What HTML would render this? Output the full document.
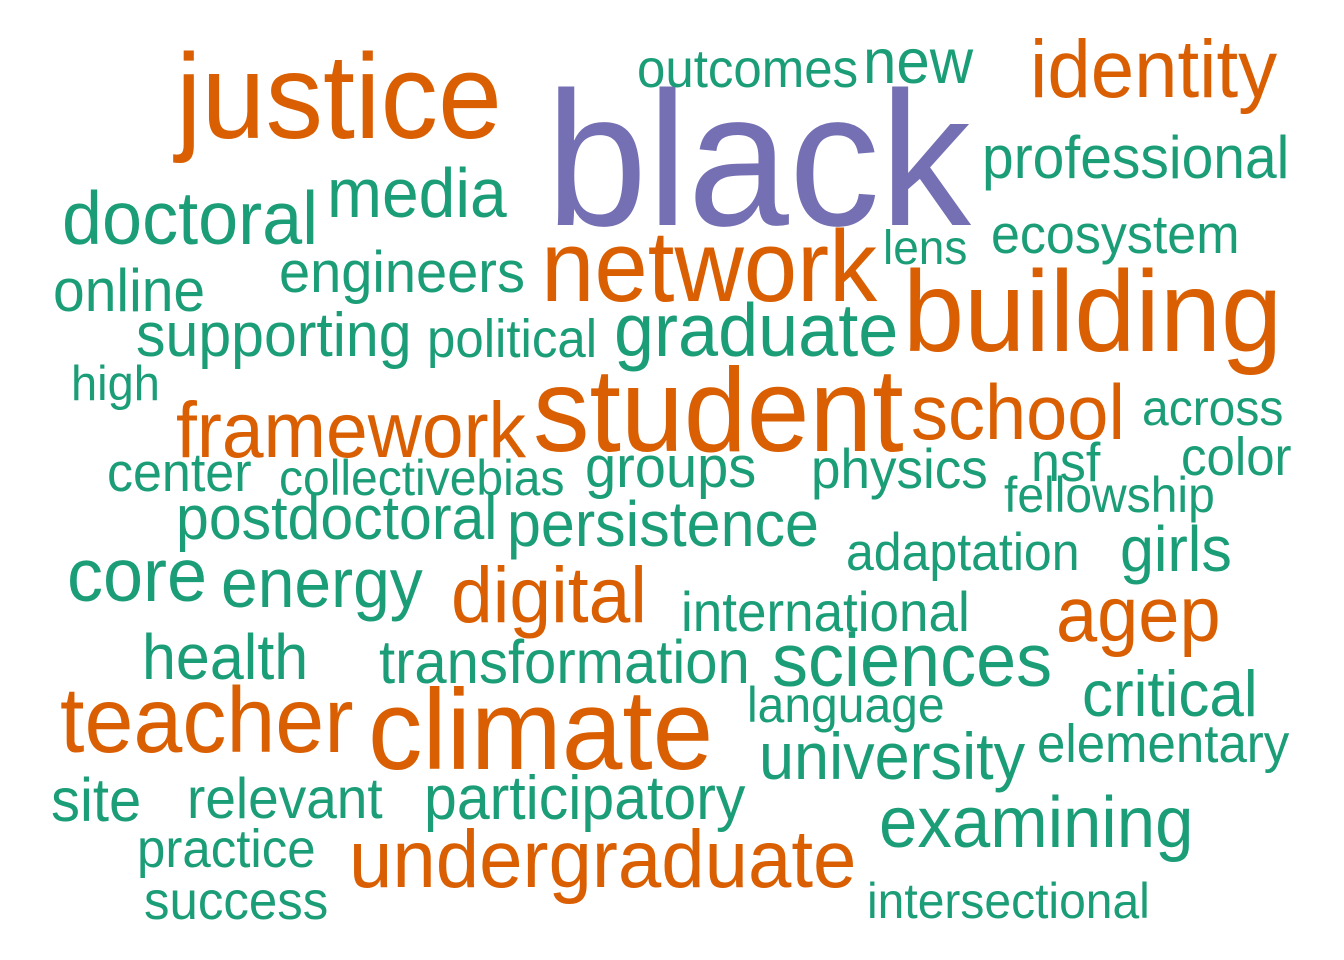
<!DOCTYPE html>
<html><head><meta charset="utf-8"><style>
html,body{margin:0;padding:0;background:#fff;width:1344px;height:960px;overflow:hidden}
body{position:relative;font-family:"Liberation Sans",Arial,sans-serif}
.w{position:absolute;white-space:nowrap;line-height:1;color:#1b9e77;
top:calc(var(--b)*1px + 2px - var(--s)*0.8465px);font-size:calc(var(--s)*1px);
transform:scaleY(1.05);transform-origin:0 0.8465em}
.o{color:#d95f02}.p{color:#7570b3}
</style></head><body>
<div class="w p" style="left:546px;--b:223;--s:182">black</div>
<div class="w o" style="left:176px;--b:137;--s:115">justice</div>
<div class="w o" style="left:1030px;--b:95;--s:78">identity</div>
<div class="w" style="left:637px;--b:85;--s:51">outcomes</div>
<div class="w" style="left:863px;--b:82;--s:60">new</div>
<div class="w" style="left:982px;--b:177;--s:57">professional</div>
<div class="w" style="left:327px;--b:215;--s:66">media</div>
<div class="w" style="left:62px;--b:243;--s:72">doctoral</div>
<div class="w o" style="left:541px;--b:300;--s:96">network</div>
<div class="w" style="left:883px;--b:262;--s:46">lens</div>
<div class="w" style="left:991px;--b:252;--s:52">ecosystem</div>
<div class="w" style="left:279px;--b:290;--s:56">engineers</div>
<div class="w" style="left:53px;--b:310;--s:57">online</div>
<div class="w o" style="left:903px;--b:350;--s:110">building</div>
<div class="w" style="left:136px;--b:355;--s:59">supporting</div>
<div class="w" style="left:427px;--b:355;--s:51">political</div>
<div class="w" style="left:614px;--b:355;--s:72">graduate</div>
<div class="w" style="left:71px;--b:398;--s:47">high</div>
<div class="w o" style="left:176px;--b:455;--s:75">framework</div>
<div class="w o" style="left:533px;--b:450;--s:113">student</div>
<div class="w o" style="left:911px;--b:438;--s:74">school</div>
<div class="w" style="left:1142px;--b:425;--s:48">across</div>
<div class="w" style="left:1031px;--b:480;--s:52">nsf</div>
<div class="w" style="left:1181px;--b:473;--s:51">color</div>
<div class="w" style="left:1004px;--b:512;--s:48">fellowship</div>
<div class="w" style="left:107px;--b:490;--s:52">center</div>
<div class="w" style="left:279px;--b:495;--s:48">collectivebias</div>
<div class="w" style="left:585px;--b:485;--s:56">groups</div>
<div class="w" style="left:811px;--b:487;--s:53">physics</div>
<div class="w" style="left:176px;--b:538;--s:59">postdoctoral</div>
<div class="w" style="left:507px;--b:545;--s:61">persistence</div>
<div class="w" style="left:846px;--b:568;--s:50">adaptation</div>
<div class="w" style="left:1120px;--b:570;--s:61">girls</div>
<div class="w" style="left:67px;--b:600;--s:72">core</div>
<div class="w" style="left:221px;--b:605;--s:66">energy</div>
<div class="w o" style="left:451px;--b:620;--s:75">digital</div>
<div class="w" style="left:681px;--b:630;--s:53">international</div>
<div class="w o" style="left:1056px;--b:640;--s:74">agep</div>
<div class="w" style="left:142px;--b:678;--s:61">health</div>
<div class="w" style="left:379px;--b:682;--s:58">transformation</div>
<div class="w" style="left:772px;--b:685;--s:72">sciences</div>
<div class="w" style="left:1082px;--b:715;--s:62">critical</div>
<div class="w o" style="left:60px;--b:750;--s:88">teacher</div>
<div class="w o" style="left:368px;--b:768;--s:109">climate</div>
<div class="w" style="left:747px;--b:722;--s:48">language</div>
<div class="w" style="left:759px;--b:778;--s:63">university</div>
<div class="w" style="left:1037px;--b:760;--s:51">elementary</div>
<div class="w" style="left:51px;--b:820;--s:58">site</div>
<div class="w" style="left:187px;--b:817;--s:55">relevant</div>
<div class="w" style="left:424px;--b:818;--s:59">participatory</div>
<div class="w" style="left:879px;--b:845;--s:69">examining</div>
<div class="w" style="left:137px;--b:865;--s:51">practice</div>
<div class="w o" style="left:349px;--b:885;--s:78">undergraduate</div>
<div class="w" style="left:144px;--b:917;--s:51">success</div>
<div class="w" style="left:867px;--b:918;--s:48">intersectional</div>
</body></html>
